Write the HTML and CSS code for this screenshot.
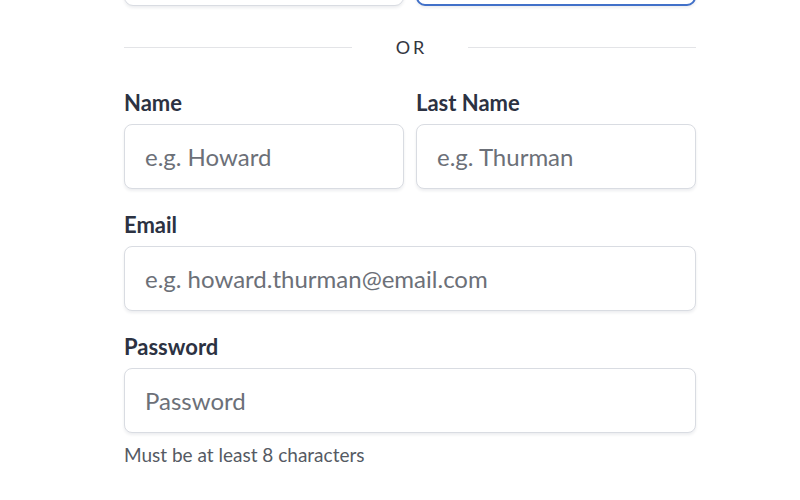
FILE: index.html
```html
<!DOCTYPE html>
<html lang="en">
<head>
<meta charset="utf-8">
<title>Sign up</title>
<link rel="stylesheet" href="styles.css">
</head>
<body>
<form class="form">
  <div class="social">
    <button type="button" class="social-btn"></button>
    <button type="button" class="social-btn social-btn--active"></button>
  </div>
  <div class="divider"><span class="divider-line"></span><span class="divider-text">OR</span><span class="divider-line"></span></div>
  <div class="row two first">
    <div class="field">
      <label class="label">Name</label>
      <input class="input" placeholder="e.g. Howard">
    </div>
    <div class="field">
      <label class="label">Last Name</label>
      <input class="input" placeholder="e.g. Thurman">
    </div>
  </div>
  <div class="row">
    <div class="field">
      <label class="label">Email</label>
      <input class="input" placeholder="e.g. howard.thurman@email.com">
    </div>
  </div>
  <div class="row">
    <div class="field">
      <label class="label">Password</label>
      <input class="input" type="password" placeholder="Password">
      <p class="hint">Must be at least 8 characters</p>
    </div>
  </div>
</form>
</body>
</html>
```
FILE: styles.css
```css
* { box-sizing: border-box; }
html, body { margin: 0; padding: 0; background: #fff; }
body { font-family: "Lato", "Open Sans", sans-serif; color: #2b3140; overflow: hidden; height: 500px; }
.form { width: 572px; margin-left: 124px; display: flex; flex-direction: column; }
.social { display: grid; grid-template-columns: 1fr 1fr; gap: 12px; margin-top: -50px; }
.social-btn { height: 56px; background: #fff; border: 1px solid #d9dce2; border-radius: 9px; box-shadow: 0 2px 3px rgba(30, 40, 60, 0.08); padding: 0; }
.social-btn--active { border: 2px solid #4170c8; }
.divider { display: flex; align-items: center; margin-top: 29px; height: 24px; }
.divider-line { flex: 1; height: 1px; background: #e3e4e7; }
.divider-text { width: 116px; text-align: center; font-size: 18px; letter-spacing: 3px; color: #333640; padding-left: 3px; }
.row { display: grid; grid-template-columns: minmax(0, 1fr); gap: 12px; margin-top: 25px; }
.row.first { margin-top: 33px; }
.row.two { grid-template-columns: minmax(0, 1fr) minmax(0, 1fr); }
.field { display: flex; flex-direction: column; min-width: 0; }
.label { font-size: 22px; font-weight: 700; line-height: 22px; color: #2c3242; margin-bottom: 10px; }
.input { width: 100%; min-width: 0; height: 65px; border: 1px solid #d9dce2; border-radius: 8px; box-shadow: 0 2px 3px rgba(30, 40, 60, 0.08); padding: 0 20px; font-family: inherit; font-size: 24px; color: #2c3242; background: #fff; outline: none; }
.input::placeholder { color: #6c7078; opacity: 1; }
.hint { margin: 11px 0 0; font-size: 19px; line-height: 22px; color: #555a63; }
```
